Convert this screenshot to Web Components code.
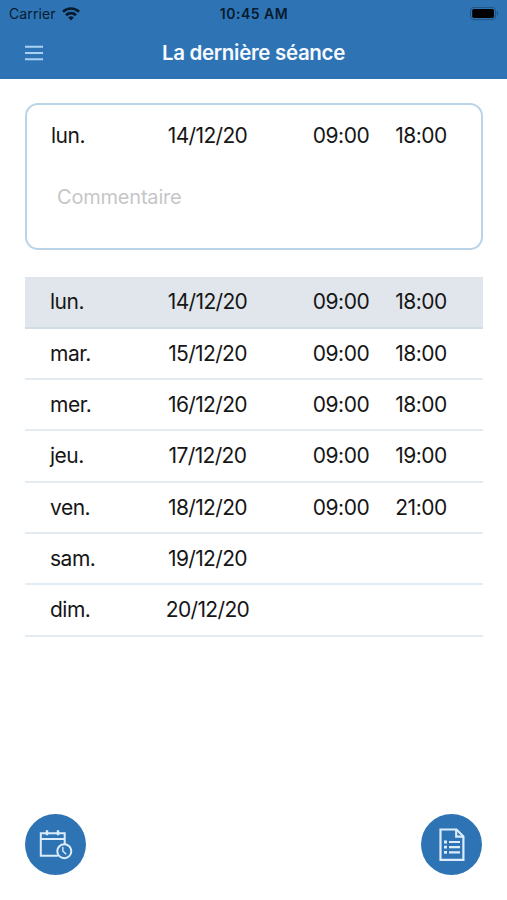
<!DOCTYPE html>
<html lang="fr">
<head>
<meta charset="UTF-8">
<meta name="viewport" content="width=device-width, initial-scale=1.0">
<title>La dernière séance</title>
<style>
    body {
        margin: 0;
        background: #fff;
        color: #161616;
        font-family: Inter, "Liberation Sans", sans-serif;
    }
</style>
</head>
<body>
<session-app></session-app>

<script>
class StatusBar extends HTMLElement {
    connectedCallback() {
        this.attachShadow({ mode: 'open' });
        this.shadowRoot.innerHTML = `
            <style>
                :host {
                    display: grid;
                    grid-template-columns: 1fr auto 1fr;
                    align-items: center;
                    height: 27px;
                    padding: 0 8px 0 9px;
                    color: #071b2e;
                    font-size: 14px;
                    line-height: 28px;
                }
                .network {
                    display: flex;
                    align-items: center;
                    gap: 6px;
                    letter-spacing: 0.1px;
                }
                .time {
                    font-weight: 600;
                    letter-spacing: 0.5px;
                }
                .battery {
                    justify-self: end;
                }
                svg {
                    display: block;
                }
            </style>
            <div class="network">
                <span>Carrier</span>
                <svg width="18" height="14" viewBox="0 0 18 14" fill="none" stroke="#071b2e" stroke-width="2.7">
                    <path d="M1 4.8a11.4 11.4 0 0 1 16 0"/>
                    <path d="M4 8.2a7.2 7.2 0 0 1 10 0"/>
                    <path d="M9 13.4l-2.8-2.9a4 4 0 0 1 5.6 0z" fill="#071b2e" stroke="none"/>
                </svg>
            </div>
            <span class="time">10:45 AM</span>
            <svg class="battery" width="30" height="14" viewBox="0 0 30 14">
                <rect x="1.5" y="0.3" width="25" height="12.4" rx="3.5" fill="none" stroke="#1f527f" stroke-width="1"/>
                <rect x="3.2" y="2" width="21.8" height="9" rx="1.8" fill="#000"/>
                <path d="M27.8 4.3c2 .6 2 3.8 0 4.4z" fill="#1f527f"/>
            </svg>
        `;
    }
}

class TitleBar extends HTMLElement {
    connectedCallback() {
        this.attachShadow({ mode: 'open' });
        this.shadowRoot.innerHTML = `
            <style>
                :host {
                    display: grid;
                    grid-template-columns: 43px 1fr 43px;
                    align-items: center;
                    height: 50px;
                    color: #f7fbff;
                }
                svg {
                    display: block;
                    justify-self: end;
                }
                h1 {
                    margin: 0;
                    font-size: 20.5px;
                    font-weight: 600;
                    line-height: 52px;
                    text-align: center;
                    white-space: nowrap;
                    letter-spacing: -0.32px;
                }
            </style>
            <svg width="18" height="16" viewBox="0 0 18 16" stroke="#a9d1f3" stroke-width="2">
                <path d="M0 1.8h18M0 8h18M0 14.2h18"/>
            </svg>
            <h1><slot></slot></h1>
        `;
    }
}

class SessionRow extends HTMLElement {
    connectedCallback() {
        this.attachShadow({ mode: 'open' });
        this.shadowRoot.innerHTML = `
            <style>
                :host {
                    display: grid;
                    grid-template-columns: 107px 101px 1fr 80px 80px 22px;
                    align-items: center;
                    box-sizing: border-box;
                    height: 51.3px;
                    padding-left: 25px;
                    border-bottom: 2px solid #e3ecf3;
                    font-size: 21px;
                    line-height: 50px;
                    letter-spacing: -0.5px;
                    white-space: nowrap;
                }
                :host([selected]) {
                    height: 51.8px;
                    background: #e1e6ec;
                    border-bottom-color: #d0dde7;
                }
                :host([plain]) {
                    grid-template-columns: 106px 101px 1fr 80px 80px 20px;
                    height: 61px;
                    padding-left: 24px;
                    border: 0;
                }
                .date, .time {
                    text-align: center;
                }
                .date {
                    letter-spacing: -0.65px;
                }
                .from {
                    grid-column: 4;
                }
            </style>
            <span>${this.getAttribute('day')}</span>
            <span class="date">${this.getAttribute('date')}</span>
            <span class="time from">${this.getAttribute('from') || ''}</span>
            <span class="time">${this.getAttribute('to') || ''}</span>
        `;
    }
}

class SessionCard extends HTMLElement {
    connectedCallback() {
        this.attachShadow({ mode: 'open' });
        this.shadowRoot.innerHTML = `
            <style>
                :host {
                    display: block;
                    box-sizing: border-box;
                    height: 147px;
                    border: 2px solid #b9d4e7;
                    border-radius: 13px;
                }
                .comment {
                    padding-left: 30px;
                    color: #c6c6c8;
                    font-size: 20px;
                    letter-spacing: -0.2px;
                    line-height: 62px;
                }
            </style>
            <slot></slot>
            <div class="comment">Commentaire</div>
        `;
    }
}

class RoundButton extends HTMLElement {
    connectedCallback() {
        this.attachShadow({ mode: 'open' });
        this.shadowRoot.innerHTML = `
            <style>
                :host {
                    display: flex;
                    align-items: center;
                    justify-content: center;
                    width: 61px;
                    height: 61px;
                    border-radius: 50%;
                    background: #2e74b5;
                }
            </style>
            <slot></slot>
        `;
    }
}

class SessionApp extends HTMLElement {
    connectedCallback() {
        this.attachShadow({ mode: 'open' });
        this.shadowRoot.innerHTML = `
            <style>
                :host {
                    display: flex;
                    flex-direction: column;
                    box-sizing: border-box;
                    height: 900px;
                }
                header {
                    height: 79px;
                    background: #2e74b5;
                }
                main {
                    flex: 1;
                    padding: 24px 24px 0 25px;
                }
                .week {
                    margin-top: 27px;
                }
                footer {
                    display: flex;
                    justify-content: space-between;
                    padding: 0 25px 25px;
                }
                svg {
                    display: block;
                }
            </style>
            <header>
                <status-bar></status-bar>
                <title-bar>La dernière séance</title-bar>
            </header>
            <main>
                <session-card>
                    <session-row plain day="lun." date="14/12/20" from="09:00" to="18:00"></session-row>
                </session-card>
                <div class="week">
                    <session-row selected day="lun." date="14/12/20" from="09:00" to="18:00"></session-row>
                    <session-row day="mar." date="15/12/20" from="09:00" to="18:00"></session-row>
                    <session-row day="mer." date="16/12/20" from="09:00" to="18:00"></session-row>
                    <session-row day="jeu." date="17/12/20" from="09:00" to="19:00"></session-row>
                    <session-row day="ven." date="18/12/20" from="09:00" to="21:00"></session-row>
                    <session-row day="sam." date="19/12/20"></session-row>
                    <session-row day="dim." date="20/12/20"></session-row>
                </div>
            </main>
            <footer>
                <round-button>
                    <svg width="61" height="61" viewBox="0 0 61 61" fill="none" stroke="#dcecfa" stroke-width="2">
                        <path d="M33 41.7H15.8V19.2H39.7V30M15.8 25H39.7"/>
                        <path d="M22 16.3v5M33 16.3v5" stroke-width="2.4"/>
                        <circle cx="39.3" cy="37.2" r="7" fill="#2e74b5"/>
                        <path d="M37.8 33v4l3.4 3.2" stroke-width="1.4"/>
                    </svg>
                </round-button>
                <round-button>
                    <svg width="61" height="61" viewBox="0 0 61 61" fill="none" stroke="#dcecfa" stroke-width="2.2">
                        <path d="M35.5 15.5H19.5V45.8H42.4V22.4z"/>
                        <path d="M35.2 15.5v7.2h7"/>
                        <path d="M28 28h11M28 33.2h11M28 38.3h11" stroke-width="2.2"/>
                        <path d="M23 28h3M23 33.2h3M23 38.3h3" stroke-width="2.8"/>
                    </svg>
                </round-button>
            </footer>
        `;
    }
}

customElements.define('status-bar', StatusBar);
customElements.define('title-bar', TitleBar);
customElements.define('session-row', SessionRow);
customElements.define('session-card', SessionCard);
customElements.define('round-button', RoundButton);
customElements.define('session-app', SessionApp);
</script>
</body>
</html>
